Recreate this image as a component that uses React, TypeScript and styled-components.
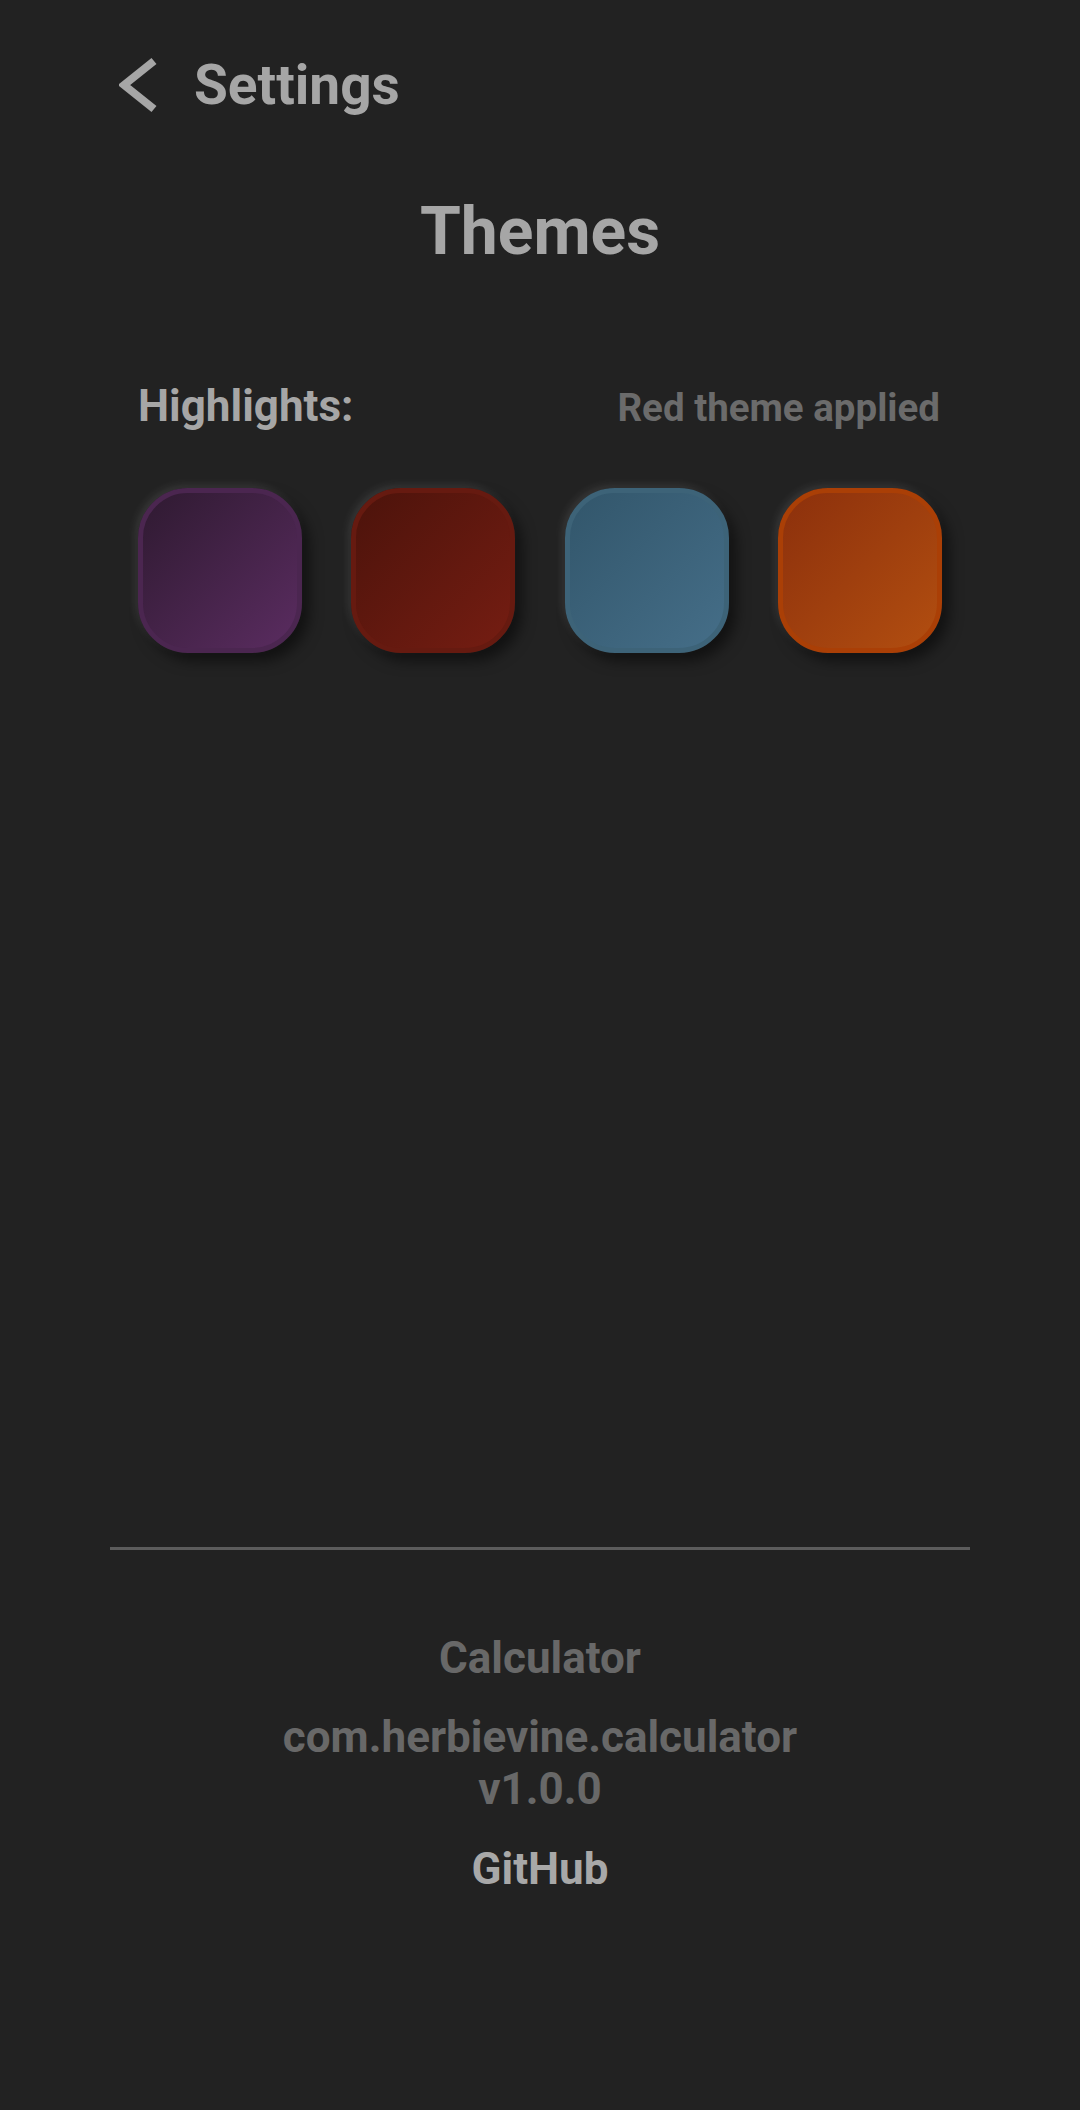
import React from 'react';
import styled, { createGlobalStyle } from 'styled-components';

const GlobalStyle = createGlobalStyle`
  html, body {
    margin: 0;
    padding: 0;
    background: #222222;
  }
  body {
    font-family: Roboto, "Noto Sans", "Liberation Sans", sans-serif;
  }
`;

const Page = styled.div`
  width: 1080px;
  min-height: 2110px;
  box-sizing: border-box;
  padding: 50px 110px 0;
  background: #222222;
  display: flex;
  flex-direction: column;
`;

const Header = styled.header`
  display: flex;
  align-items: center;
  height: 70px;
  padding-left: 9px;
  gap: 35px;
`;

const BackButton = styled.button`
  display: flex;
  align-items: center;
  padding: 0;
  border: none;
  background: none;
  cursor: pointer;
`;

const HeaderTitle = styled.h1`
  margin: 0;
  font-size: 55px;
  line-height: 70px;
  font-weight: 700;
  color: #a6a6a6;
`;

const PageTitle = styled.h2`
  margin: 72px 0 0;
  text-align: center;
  font-size: 66px;
  line-height: 80px;
  font-weight: 700;
  color: #a6a6a6;
`;

const Section = styled.section`
  margin-top: 106px;
  padding: 0 28px;
`;

const SectionHead = styled.div`
  display: flex;
  justify-content: space-between;
  align-items: baseline;
  line-height: 56px;
`;

const Label = styled.span`
  font-size: 44px;
  font-weight: 700;
  color: #a6a6a6;
`;

const Status = styled.span`
  font-size: 38.5px;
  font-weight: 700;
  color: #6b6b6b;
  margin-right: 2px;
`;

const Swatches = styled.div`
  display: flex;
  justify-content: space-between;
  margin-top: 52px;
`;

const Swatch = styled.button<{ $base: string; $from: string; $to: string }>`
  width: 164px;
  height: 165px;
  box-sizing: border-box;
  padding: 0;
  border-radius: 50px;
  border: 5px solid ${(p) => p.$base};
  background: linear-gradient(135deg, ${(p) => p.$from}, ${(p) => p.$to});
  box-shadow: 7px 8px 14px rgba(0, 0, 0, 0.5), -3px -3px 9px rgba(255, 255, 255, 0.1);
  cursor: pointer;
`;

const Divider = styled.hr`
  margin: 894px 0 0;
  border: none;
  height: 3px;
  background: #5c5c5c;
`;

const Footer = styled.footer`
  margin-top: 82px;
  display: flex;
  flex-direction: column;
  align-items: center;
  text-align: center;
  font-size: 44px;
  font-weight: 700;
  line-height: 52px;
`;

const AppName = styled.div`
  color: #686868;
`;

const AppMeta = styled.div`
  margin-top: 27px;
  color: #686868;
`;

const Link = styled.a`
  margin-top: 28px;
  color: #a8a8a8;
  text-decoration: none;
`;

const themes = [
  { name: 'Purple', base: '#4b2650', from: '#2f1a31', to: '#5a2c60' },
  { name: 'Red', base: '#661a10', from: '#4c130b', to: '#751d12' },
  { name: 'Blue', base: '#3d6378', from: '#32566b', to: '#456e88' },
  { name: 'Orange', base: '#aa3f06', from: '#8c300c', to: '#b24e10' },
];

const ChevronLeft = () => (
  <svg width="40" height="58" viewBox="0 0 40 58" fill="none">
    <path d="M35 5 L5 29 L35 53" stroke="#a6a6a6" strokeWidth="8" strokeLinejoin="miter" />
  </svg>
);

export default function App() {
  return (
    <>
      <GlobalStyle />
      <Page>
        <Header>
          <BackButton aria-label="Back">
            <ChevronLeft />
          </BackButton>
          <HeaderTitle>Settings</HeaderTitle>
        </Header>

        <PageTitle>Themes</PageTitle>

        <Section>
          <SectionHead>
            <Label>Highlights:</Label>
            <Status>Red theme applied</Status>
          </SectionHead>
          <Swatches>
            {themes.map((t) => (
              <Swatch key={t.name} aria-label={t.name} $base={t.base} $from={t.from} $to={t.to} />
            ))}
          </Swatches>
        </Section>

        <Divider />

        <Footer>
          <AppName>Calculator</AppName>
          <AppMeta>
            com.herbievine.calculator
            <br />
            v1.0.0
          </AppMeta>
          <Link href="#">GitHub</Link>
        </Footer>
      </Page>
    </>
  );
}
